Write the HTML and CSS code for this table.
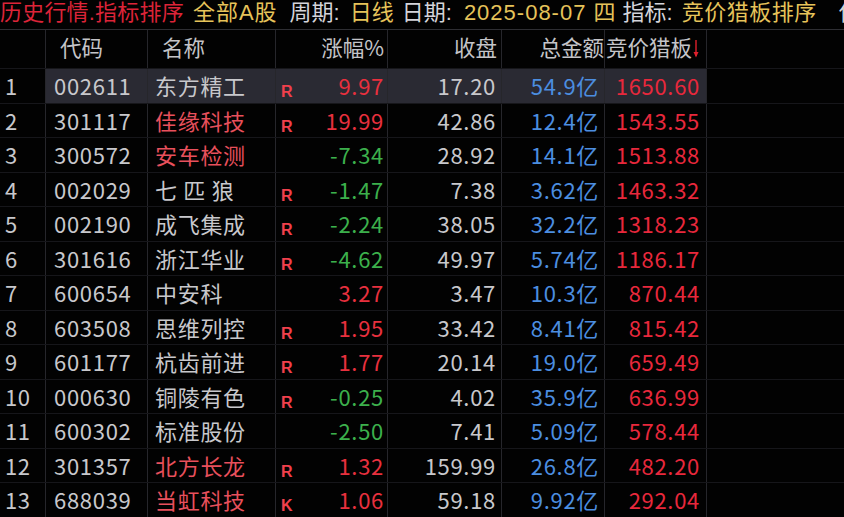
FILE: index.html
```html
<!DOCTYPE html>
<html lang="zh-CN">
<head>
<meta charset="utf-8">
<link rel="stylesheet" href="styles.css">
</head>
<body>
<div class="screen">
  <div class="titlebar">
    <span class="red t1">历史行情.指标排序</span>
    <span class="yellow t2">全部A股</span>
    <span class="white t3">周期:</span>
    <span class="yellow t4">日线</span>
    <span class="white t5">日期:</span>
    <span class="yellow t6 date">2025-08-07 四</span>
    <span class="white t7">指标:</span>
    <span class="yellow t8">竞价猎板排序</span>
    <span class="white t9">使</span>
  </div>
  <div class="table">
    <div class="row head">
      <div class="c num"></div>
      <div class="c code h-left">代码</div>
      <div class="c name h-left">名称</div>
      <div class="c pct">涨幅%</div>
      <div class="c close">收盘</div>
      <div class="c amt">总金额</div>
      <div class="c score">竞价猎板<svg class="arrow" width="6" height="18" viewBox="0 0 6 18"><path d="M3 0V16" stroke="#e0202c" stroke-width="1.4"/><path d="M0.5 12L3 17.5L5.5 12Z" fill="#e0202c"/></svg></div>
      <div class="c rest"></div>
    </div>

    <div class="row sel">
      <div class="c num">1</div><div class="c code">002611</div><div class="c name">东方精工</div>
      <div class="c pct"><span class="mark">R</span><span class="up">9.97</span></div>
      <div class="c close">17.20</div><div class="c amt">54.9亿</div><div class="c score">1650.60</div><div class="c rest"></div>
    </div>
    <div class="row">
      <div class="c num">2</div><div class="c code">301117</div><div class="c name hot">佳缘科技</div>
      <div class="c pct"><span class="mark">R</span><span class="up">19.99</span></div>
      <div class="c close">42.86</div><div class="c amt">12.4亿</div><div class="c score">1543.55</div><div class="c rest"></div>
    </div>
    <div class="row">
      <div class="c num">3</div><div class="c code">300572</div><div class="c name hot">安车检测</div>
      <div class="c pct"><span class="mark"></span><span class="down">-7.34</span></div>
      <div class="c close">28.92</div><div class="c amt">14.1亿</div><div class="c score">1513.88</div><div class="c rest"></div>
    </div>
    <div class="row">
      <div class="c num">4</div><div class="c code">002029</div><div class="c name">七 匹 狼</div>
      <div class="c pct"><span class="mark">R</span><span class="down">-1.47</span></div>
      <div class="c close">7.38</div><div class="c amt">3.62亿</div><div class="c score">1463.32</div><div class="c rest"></div>
    </div>
    <div class="row">
      <div class="c num">5</div><div class="c code">002190</div><div class="c name">成飞集成</div>
      <div class="c pct"><span class="mark">R</span><span class="down">-2.24</span></div>
      <div class="c close">38.05</div><div class="c amt">32.2亿</div><div class="c score">1318.23</div><div class="c rest"></div>
    </div>
    <div class="row">
      <div class="c num">6</div><div class="c code">301616</div><div class="c name">浙江华业</div>
      <div class="c pct"><span class="mark">R</span><span class="down">-4.62</span></div>
      <div class="c close">49.97</div><div class="c amt">5.74亿</div><div class="c score">1186.17</div><div class="c rest"></div>
    </div>
    <div class="row">
      <div class="c num">7</div><div class="c code">600654</div><div class="c name">中安科</div>
      <div class="c pct"><span class="mark"></span><span class="up">3.27</span></div>
      <div class="c close">3.47</div><div class="c amt">10.3亿</div><div class="c score">870.44</div><div class="c rest"></div>
    </div>
    <div class="row">
      <div class="c num">8</div><div class="c code">603508</div><div class="c name">思维列控</div>
      <div class="c pct"><span class="mark">R</span><span class="up">1.95</span></div>
      <div class="c close">33.42</div><div class="c amt">8.41亿</div><div class="c score">815.42</div><div class="c rest"></div>
    </div>
    <div class="row">
      <div class="c num">9</div><div class="c code">601177</div><div class="c name">杭齿前进</div>
      <div class="c pct"><span class="mark">R</span><span class="up">1.77</span></div>
      <div class="c close">20.14</div><div class="c amt">19.0亿</div><div class="c score">659.49</div><div class="c rest"></div>
    </div>
    <div class="row">
      <div class="c num">10</div><div class="c code">000630</div><div class="c name">铜陵有色</div>
      <div class="c pct"><span class="mark">R</span><span class="down">-0.25</span></div>
      <div class="c close">4.02</div><div class="c amt">35.9亿</div><div class="c score">636.99</div><div class="c rest"></div>
    </div>
    <div class="row">
      <div class="c num">11</div><div class="c code">600302</div><div class="c name">标准股份</div>
      <div class="c pct"><span class="mark"></span><span class="down">-2.50</span></div>
      <div class="c close">7.41</div><div class="c amt">5.09亿</div><div class="c score">578.44</div><div class="c rest"></div>
    </div>
    <div class="row">
      <div class="c num">12</div><div class="c code">301357</div><div class="c name hot">北方长龙</div>
      <div class="c pct"><span class="mark">R</span><span class="up">1.32</span></div>
      <div class="c close">159.99</div><div class="c amt">26.8亿</div><div class="c score">482.20</div><div class="c rest"></div>
    </div>
    <div class="row">
      <div class="c num">13</div><div class="c code">688039</div><div class="c name hot">当虹科技</div>
      <div class="c pct"><span class="mark">K</span><span class="up">1.06</span></div>
      <div class="c close">59.18</div><div class="c amt">9.92亿</div><div class="c score">292.04</div><div class="c rest"></div>
    </div>
  </div>
</div>
</body>
</html>
```

FILE: styles.css
```css
* { box-sizing: border-box; }
html, body {
  margin: 0;
  padding: 0;
  background: #000;
  overflow: hidden;
}
.screen {
  width: 844px;
  height: 517px;
  background: #020202;
  font-family: "Noto Sans CJK SC", "Noto Sans", sans-serif;
  color: #c8c8cc;
  overflow: hidden;
}
.titlebar {
  height: 30px;
  border-bottom: 1px solid #2e2e33;
  font-family: "Liberation Sans", "Noto Sans CJK SC", sans-serif;
  font-size: 22px;
  line-height: 26px;
  padding-top: 0;
  white-space: nowrap;
  display: flex;
  align-items: flex-start;
}
.titlebar span { flex: none; }
.t1 { letter-spacing: 0.2px; }
.t2 { margin-left: 9px; letter-spacing: 1px; }
.t3 { margin-left: 12px; }
.t4 { margin-left: 10px; }
.t5 { margin-left: 8px; }
.t6 { margin-left: 12px; }
.date { letter-spacing: 1px; }
.t7 { margin-left: 6px; }
.t8 { margin-left: 9px; letter-spacing: 0.5px; }
.t9 { margin-left: 22px; }
.red { color: #dc2438; }
.yellow { color: #e6c35a; }
.white { color: #d4d4da; }

.row {
  display: grid;
  grid-template-columns: 46px 102px 128px 112px 114px 103px 102px 1fr;
  height: 34.5px;
  font-size: 22px;
  line-height: 32px;
  letter-spacing: 0.7px;
  border-bottom: 1px solid #16161a;
}
.row.head {
  height: 39px;
  line-height: 34px;
  font-size: 21.5px;
  letter-spacing: 0;
  color: #c4c4c8;
}
.c {
  border-right: 1px solid #26262b;
  white-space: nowrap;
  overflow: hidden;
}
.c.rest { border-right: none; }
.row.sel .c:not(.num):not(.rest) { background: #2a2a33; }

.num { padding-left: 5px; color: #c8c8cc; letter-spacing: 0.5px; }
.code { padding-left: 8px; }
.name { padding-left: 7px; }
.h-left { padding-left: 14px; }
.name.hot { color: #e8505c; }
.pct {
  display: flex;
  justify-content: space-between;
  align-items: baseline;
  padding: 0 3px 0 5px;
  text-align: right;
}
.head .pct { justify-content: flex-end; padding-right: 3px; }
.mark {
  font-family: "Liberation Sans", sans-serif;
  font-weight: bold;
  font-size: 16px;
  letter-spacing: 0;
  color: #f0404c;
  position: relative;
  top: 2px;
}
.up { color: #e8303e; }
.down { color: #3cb04c; }
.close { text-align: right; padding-right: 5px; }
.amt { text-align: right; padding-right: 5px; color: #4c8ee0; }
.score { text-align: right; padding-right: 6px; color: #e8283c; }
.head .close { padding-right: 4px; }
.head .amt { color: #c4c4c8; padding-right: 0; }
.head .score { color: #c4c4c8; text-align: left; padding-left: 1px; padding-right: 0; }
.arrow { vertical-align: -2px; margin-left: 1px; }
```
